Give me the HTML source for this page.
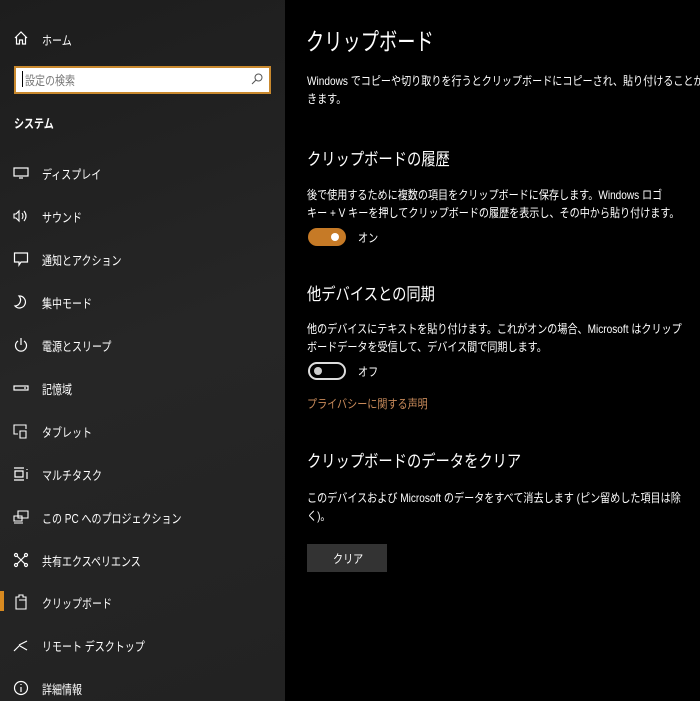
<!DOCTYPE html>
<html><head><meta charset="utf-8"><style>
*{margin:0;padding:0;box-sizing:border-box}
body{width:700px;height:701px;overflow:hidden;background:#000;font-family:"Liberation Sans","Noto Sans CJK JP",sans-serif;color:#fff;position:relative}
#side{position:absolute;left:0;top:0;width:285px;height:701px;background:linear-gradient(160deg,#1d1d1d,#262626 50%,#222);overflow:hidden}
#main{position:absolute;left:285px;top:0;width:415px;height:701px;overflow:hidden}
.t{position:absolute;white-space:nowrap;transform-origin:0 0}
.it{position:absolute;left:0;width:285px;height:20px;font-size:12.5px}
.it svg{position:absolute;left:13px;top:2px}
.it span{position:absolute;left:42px;top:1px;white-space:nowrap;transform:scaleX(.8);transform-origin:0 0}
.h{font-size:17px;transform:scaleX(.84)}
.p{font-size:12px;line-height:18px;transform:scaleX(.84)}
</style></head><body>
<div id="side">
 <div class="it" style="top:28px"><svg width="16" height="16" viewBox="0 0 16 16" fill="none" stroke="#fff" stroke-width="1.2"><path d="M2 8L8 2l6 6M3.5 7v7h3v-4h3v4h3V7"/></svg><span style="top:2px">ホーム</span></div>
 <div style="position:absolute;left:14px;top:66px;width:257px;height:28px;background:#fff;border:2px solid #c9892e"></div>
 <div class="t" style="left:22px;top:71px;width:1px;height:16px;background:#000"></div>
 <div class="t" style="left:25px;top:70px;font-size:12.5px;color:#777;transform:scaleX(.8)">設定の検索</div>
 <svg class="t" style="left:250px;top:72px" width="14" height="14" viewBox="0 0 14 14" fill="none" stroke="#555" stroke-width="1"><circle cx="8.5" cy="5.5" r="3.5"/><path d="M6 8L2 12"/></svg>
 <div class="t" style="left:14px;top:113px;font-size:12.5px;font-weight:bold;transform:scaleX(.8)">システム</div>
 <div class="it" style="top:163px"><svg width="16" height="16" viewBox="0 0 16 16" fill="none" stroke="#fff" stroke-width="1.2"><rect x="1" y="3" width="14" height="8"/><path d="M6 13h4"/></svg><span>ディスプレイ</span></div>
 <div class="it" style="top:206px"><svg width="16" height="16" viewBox="0 0 16 16" fill="none" stroke="#fff" stroke-width="1.1"><path d="M1 6h2l3-3v10l-3-3H1z M9 5q2 3 0 6 M11 3q4 5 0 10"/></svg><span>サウンド</span></div>
 <div class="it" style="top:249px"><svg width="16" height="16" viewBox="0 0 16 16" fill="none" stroke="#fff" stroke-width="1.2"><path d="M1.5 2h13v9H8l-2 3v-3H1.5z"/></svg><span>通知とアクション</span></div>
 <div class="it" style="top:292px"><svg width="16" height="16" viewBox="0 0 16 16" fill="none" stroke="#fff" stroke-width="1.2"><path d="M6 2a6 6 0 1 1-4 10a6 6 0 0 0 4-10z"/></svg><span>集中モード</span></div>
 <div class="it" style="top:335px"><svg width="16" height="16" viewBox="0 0 16 16" fill="none" stroke="#fff" stroke-width="1.2"><path d="M5 4a5.5 5.5 0 1 0 6 0M8 1v7"/></svg><span>電源とスリープ</span></div>
 <div class="it" style="top:378px"><svg width="16" height="16" viewBox="0 0 16 16" fill="none" stroke="#fff" stroke-width="1.2"><rect x="1" y="6" width="14" height="4"/><path d="M11 8h2"/></svg><span>記憶域</span></div>
 <div class="it" style="top:421px"><svg width="16" height="16" viewBox="0 0 16 16" fill="none" stroke="#fff" stroke-width="1.1"><path d="M5 11H1V2h12v4M7 8h6v7H7z"/></svg><span>タブレット</span></div>
 <div class="it" style="top:464px"><svg width="16" height="16" viewBox="0 0 16 16" fill="none" stroke="#fff" stroke-width="1.2"><path d="M1 2h10M1 14h10M2 5h8v6H2zM14 3v1M14 6v7"/></svg><span>マルチタスク</span></div>
 <div class="it" style="top:507px"><svg width="16" height="16" viewBox="0 0 16 16" fill="none" stroke="#fff" stroke-width="1.1"><path d="M5 2h10v7H5zM1 7h8v5H1zM1 14h9"/></svg><span>この PC へのプロジェクション</span></div>
 <div class="it" style="top:550px"><svg width="16" height="16" viewBox="0 0 16 16" fill="none" stroke="#fff" stroke-width="1.2"><path d="M4 4l8 8M12 4l-8 8"/><circle cx="3" cy="3" r="1.5"/><circle cx="13" cy="3" r="1.5"/><circle cx="3" cy="13" r="1.5"/><circle cx="13" cy="13" r="1.5"/></svg><span>共有エクスペリエンス</span></div>
 <div style="position:absolute;left:0;top:591px;width:4px;height:20px;background:#d88a20"></div>
 <div class="it" style="top:592px"><svg width="16" height="16" viewBox="0 0 16 16" fill="none" stroke="#fff" stroke-width="1.1"><path d="M3 3h3V1h4v2h3v12H3zM6 6h7"/></svg><span>クリップボード</span></div>
 <div class="it" style="top:635px"><svg width="16" height="16" viewBox="0 0 16 16" fill="none" stroke="#fff" stroke-width="1.2"><path d="M1 14l6-6M6 8l8-4M7 9l7 4"/></svg><span>リモート デスクトップ</span></div>
 <div class="it" style="top:678px"><svg width="16" height="16" viewBox="0 0 16 16" fill="none" stroke="#fff" stroke-width="1.2"><circle cx="8" cy="8" r="6.5"/><path d="M8 7v5M8 4v1"/></svg><span>詳細情報</span></div>
</div>
<div id="main">
<div class="t" style="left:21px;top:22px;font-size:24px;transform:scaleX(.76)">クリップボード</div>
<div class="t p" style="left:22px;top:72px">Windows でコピーや切り取りを行うとクリップボードにコピーされ、貼り付けることができ<br>きます。</div>
<div class="t h" style="left:22px;top:145px">クリップボードの履歴</div>
<div class="t p" style="left:22px;top:186px">後で使用するために複数の項目をクリップボードに保存します。Windows ロゴ<br>キー + V キーを押してクリップボードの履歴を表示し、その中から貼り付けます。</div>
<div style="position:absolute;left:23px;top:228px;width:38px;height:18px;border-radius:9px;background:#c67a26"></div>
<div style="position:absolute;left:46px;top:233px;width:8px;height:8px;border-radius:50%;background:#fff"></div>
<div class="t" style="left:73px;top:229px;font-size:12px;transform:scaleX(.84)">オン</div>
<div class="t h" style="left:22px;top:280px">他デバイスとの同期</div>
<div class="t p" style="left:22px;top:320px">他のデバイスにテキストを貼り付けます。これがオンの場合、Microsoft はクリップ<br>ボードデータを受信して、デバイス間で同期します。</div>
<div style="position:absolute;left:23px;top:362px;width:38px;height:18px;border-radius:9px;border:2px solid #ddd"></div>
<div style="position:absolute;left:29px;top:367px;width:8px;height:8px;border-radius:50%;background:#ccc"></div>
<div class="t" style="left:73px;top:363px;font-size:12px;transform:scaleX(.84)">オフ</div>
<div class="t" style="left:22px;top:395px;font-size:12px;color:#c88a5a;transform:scaleX(.84)">プライバシーに関する声明</div>
<div class="t h" style="left:22px;top:447px">クリップボードのデータをクリア</div>
<div class="t p" style="left:22px;top:489px">このデバイスおよび Microsoft のデータをすべて消去します (ピン留めした項目は除<br>く)。</div>
<div style="position:absolute;left:22px;top:544px;width:80px;height:28px;background:#333"></div>
<div class="t" style="left:48px;top:550px;font-size:12px;transform:scaleX(.84)">クリア</div>
</div>
</body></html>
